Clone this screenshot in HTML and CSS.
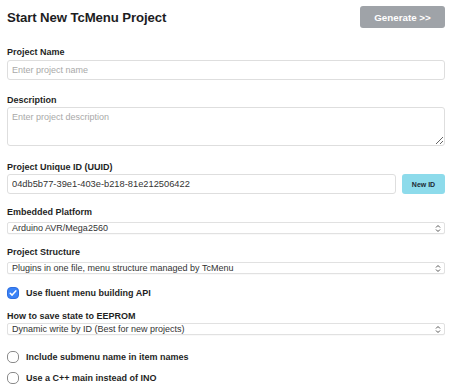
FILE: index.html
```html
<!DOCTYPE html>
<html>
<head>
<meta charset="utf-8">
<title>Start New TcMenu Project</title>
<link rel="stylesheet" href="styles.css">
</head>
<body>
<div class="page">
  <div class="header">
    <h1 class="title">Start New TcMenu Project</h1>
    <button class="btn-generate">Generate &gt;&gt;</button>
  </div>

  <div class="group g-name">
    <label class="field-label">Project Name</label>
    <input class="text-input" type="text" placeholder="Enter project name">
  </div>

  <div class="group g-desc">
    <label class="field-label lbl-tight">Description</label>
    <textarea class="text-area" placeholder="Enter project description"></textarea>
  </div>

  <div class="group g-uuid">
    <label class="field-label lbl-tight">Project Unique ID (UUID)</label>
    <div class="uuid-row">
      <input class="text-input uuid-input" type="text" value="04db5b77-39e1-403e-b218-81e212506422">
      <button class="btn-newid">New ID</button>
    </div>
  </div>

  <div class="group g-sel">
    <label class="field-label lbl-sel">Embedded Platform</label>
    <div class="select">
      <span class="select-text">Arduino AVR/Mega2560</span>
      <svg class="chev" width="6" height="9" viewBox="0 0 6 9"><path d="M1 3.5 L3 1.5 L5 3.5 M1 5.5 L3 7.5 L5 5.5" fill="none" stroke="#555" stroke-width="1"/></svg>
    </div>
  </div>

  <div class="group g-sel2">
    <label class="field-label lbl-sel">Project Structure</label>
    <div class="select">
      <span class="select-text">Plugins in one file, menu structure managed by TcMenu</span>
      <svg class="chev" width="6" height="9" viewBox="0 0 6 9"><path d="M1 3.5 L3 1.5 L5 3.5 M1 5.5 L3 7.5 L5 5.5" fill="none" stroke="#555" stroke-width="1"/></svg>
    </div>
  </div>

  <div class="check-row cr-first">
    <svg class="cb" width="12" height="12" viewBox="0 0 12 12"><rect x="0.5" y="0.5" width="11" height="11" rx="3.5" fill="#3a82f6" stroke="#2f6fe0"/><path d="M3.2 6.2 L5.1 8.1 L8.8 3.9" fill="none" stroke="#fff" stroke-width="1.5" stroke-linecap="round" stroke-linejoin="round"/></svg>
    <span class="check-label">Use fluent menu building API</span>
  </div>

  <div class="group g-eeprom">
    <label class="field-label lbl-tight">How to save state to EEPROM</label>
    <div class="select">
      <span class="select-text">Dynamic write by ID (Best for new projects)</span>
      <svg class="chev" width="6" height="9" viewBox="0 0 6 9"><path d="M1 3.5 L3 1.5 L5 3.5 M1 5.5 L3 7.5 L5 5.5" fill="none" stroke="#555" stroke-width="1"/></svg>
    </div>
  </div>

  <div class="check-row cr-second">
    <svg class="cb" width="12" height="12" viewBox="0 0 12 12"><rect x="0.5" y="0.5" width="11" height="11" rx="4.5" fill="#fff" stroke="#8a8a8a"/></svg>
    <span class="check-label">Include submenu name in item names</span>
  </div>

  <div class="check-row cr-third">
    <svg class="cb" width="12" height="12" viewBox="0 0 12 12"><rect x="0.5" y="0.5" width="11" height="11" rx="4.5" fill="#fff" stroke="#8a8a8a"/></svg>
    <span class="check-label">Use a C++ main instead of INO</span>
  </div>
</div>
</body>
</html>
```

FILE: styles.css
```css
* { box-sizing: border-box; }
html, body { margin: 0; padding: 0; background: #fff; }
body { font-family: "Liberation Sans", Arial, sans-serif; color: #212529; }

.page { padding: 6px 5px 0 7px; }

.header {
  display: flex;
  justify-content: space-between;
  align-items: center;
  height: 22px;
}
.title {
  margin: 0;
  font-size: 13.2px;
  font-weight: bold;
  color: #1d1d1f;
  letter-spacing: -0.1px;
}
.btn-generate {
  width: 85px;
  height: 22px;
  border: none;
  border-radius: 3px;
  background: #9fa3a8;
  color: #fff;
  font-family: inherit;
  font-weight: bold;
  font-size: 9.8px;
  padding: 0;
}

.field-label {
  display: block;
  font-size: 9px;
  line-height: 11px;
  font-weight: bold;
  color: #1f1f1f;
  margin-bottom: 2px;
}
.lbl-tight { margin-bottom: 1px; }
.lbl-sel { margin-bottom: 4px; }

.group { display: block; }
.g-name { margin-top: 19px; }
.g-desc { margin-top: 15px; }
.g-uuid { margin-top: 16px; }
.g-sel { margin-top: 13px; }
.g-sel2 { margin-top: 13px; }
.g-eeprom { margin-top: 12px; }

.text-input {
  display: block;
  width: 100%;
  height: 20px;
  border: 1px solid #dedede;
  border-radius: 3px;
  padding: 0 4px;
  font-family: inherit;
  font-size: 9px;
  color: #333;
  background: #fff;
  outline: none;
}
.text-input::placeholder, .text-area::placeholder { color: #a9a9a9; }

.text-area {
  display: block;
  width: 100%;
  height: 39px;
  border: 1px solid #dedede;
  border-radius: 3px;
  padding: 4px 4px;
  font-family: inherit;
  font-size: 9px;
  line-height: 11px;
  background: #fff;
  outline: none;
}

.uuid-row {
  display: flex;
  gap: 6px;
}
.uuid-input { flex: 1; width: auto; font-size: 9.3px; }
.btn-newid {
  width: 43px;
  height: 20px;
  flex: none;
  border: none;
  border-radius: 3px;
  background: #8ddbeb;
  color: #1b2a33;
  font-family: inherit;
  font-weight: bold;
  font-size: 7px;
  padding: 0;
}

.select {
  display: flex;
  align-items: center;
  justify-content: space-between;
  height: 12px;
  border: 1px solid #e1e1e1;
  border-radius: 2px;
  padding: 0 3px 0 4px;
  background: #fff;
  box-shadow: 0 0.5px 0.5px rgba(0,0,0,0.05);
}
.select-text {
  font-size: 9px;
  line-height: 10px;
  color: #333;
  white-space: nowrap;
}
.chev { flex: none; }

.check-row {
  display: flex;
  align-items: center;
  gap: 7px;
  height: 12px;
}
.cb { flex: none; }
.check-label {
  font-size: 9px;
  font-weight: bold;
  color: #1f1f1f;
  line-height: 11px;
}
.cr-first { margin-top: 13px; }
.cr-second { margin-top: 16px; }
.cr-third { margin-top: 9px; }
```
